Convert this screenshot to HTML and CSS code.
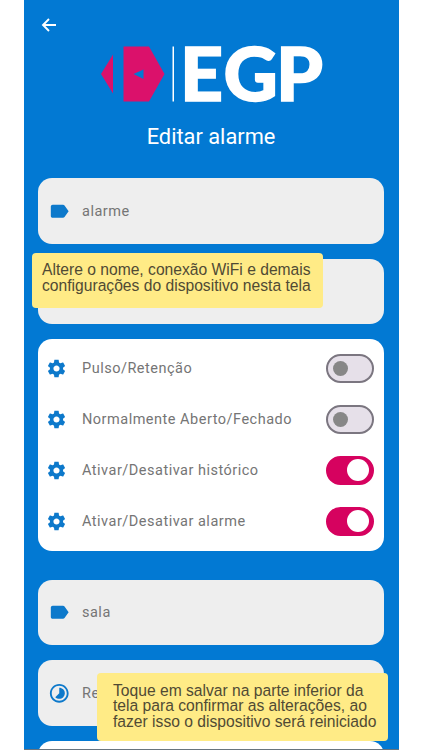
FILE: index.html
```html
<!DOCTYPE html>
<html lang="pt-BR">
<head>
    <title>Editar alarme</title>
    <meta charset="UTF-8">
    <meta name="viewport" content="width=device-width, initial-scale=1.0">
    <link rel="stylesheet" href="styles.css">
</head>
<body>
    <!-- shared icons -->
    <svg class="sprite">
        <symbol id="label" viewBox="0 0 24 24"><path d="M17.63 5.84C17.27 5.33 16.67 5 16 5L5 5.01C3.9 5.01 3 5.9 3 7v10c0 1.1.9 1.99 2 1.99L16 19c.67 0 1.27-.33 1.63-.84L22 12l-4.37-6.16z"/></symbol>
        <symbol id="gear" viewBox="0 0 24 24"><path d="M19.43 12.98c.04-.32.07-.64.07-.98s-.03-.66-.07-.98l2.11-1.65c.19-.15.24-.42.12-.64l-2-3.46c-.12-.22-.39-.3-.61-.22l-2.49 1c-.52-.4-1.08-.73-1.69-.98l-.38-2.65C14.46 2.18 14.25 2 14 2h-4c-.25 0-.46.18-.49.42l-.38 2.65c-.61.25-1.17.59-1.69.98l-2.49-1c-.23-.09-.49 0-.61.22l-2 3.46c-.13.22-.07.49.12.64l2.11 1.65c-.04.32-.07.65-.07.98s.03.66.07.98l-2.11 1.65c-.19.15-.24.42-.12.64l2 3.46c.12.22.39.3.61.22l2.49-1c.52.4 1.08.73 1.69.98l.38 2.65c.03.24.24.42.49.42h4c.25 0 .46-.18.49-.42l.38-2.65c.61-.25 1.17-.59 1.69-.98l2.49 1c.23.09.49 0 .61-.22l2-3.46c.12-.22.07-.49-.12-.64l-2.11-1.65zM12 15.5c-1.93 0-3.5-1.57-3.5-3.5s1.57-3.5 3.5-3.5 3.5 1.57 3.5 3.5-1.57 3.5-3.5 3.5z"/></symbol>
        <symbol id="timelapse" viewBox="0 0 24 24"><path d="M16.24 7.76C15.07 6.59 13.54 6 12 6v6l-4.24 4.24c2.34 2.34 6.14 2.34 8.49 0 2.34-2.34 2.34-6.14-.01-8.48zM12 2C6.48 2 2 6.48 2 12s4.48 10 10 10 10-4.48 10-10S17.52 2 12 2zm0 18c-4.42 0-8-3.58-8-8s3.58-8 8-8 8 3.58 8 8-3.58 8-8 8z"/></symbol>
    </svg>

    <div class="screen">
        <header>
            <svg class="back" viewBox="0 0 16 16"><path d="M15 8H2M8 2L2 8l6 6"/></svg>
            <svg class="logo" viewBox="0 -20 232 96">
                <path class="mark" d="M0 29L12 9.500v39zM22.500 1.500h25.500L63.500 29 48 56.500H22.500z"/>
                <path class="eye" d="M32.500 29L42.500 24.500v9.500z"/>
                <path class="bar" d="M71.500 1.500H73v55h-1.500z"/>
                <text x="79 122.500 175" y="56">EGP</text>
            </svg>
            <h1>Editar alarme</h1>
        </header>

        <div class="field">
            <svg class="icon"><use href="#label"/></svg>
            <span>alarme</span>
        </div>
        <div class="field covered">
            <div class="note note-top">Altere o nome, conexão WiFi e demais<br>configurações do dispositivo nesta tela</div>
        </div>

        <div class="panel">
            <div class="row">
                <svg class="icon"><use href="#gear"/></svg>
                <span>Pulso/Retenção</span>
                <div class="switch"></div>
            </div>
            <div class="row">
                <svg class="icon"><use href="#gear"/></svg>
                <span>Normalmente Aberto/Fechado</span>
                <div class="switch"></div>
            </div>
            <div class="row">
                <svg class="icon"><use href="#gear"/></svg>
                <span>Ativar/Desativar histórico</span>
                <div class="switch on"></div>
            </div>
            <div class="row">
                <svg class="icon"><use href="#gear"/></svg>
                <span>Ativar/Desativar alarme</span>
                <div class="switch on"></div>
            </div>
        </div>

        <div class="field">
            <svg class="icon"><use href="#label"/></svg>
            <span>sala</span>
        </div>
        <div class="field covered">
            <svg class="icon"><use href="#timelapse"/></svg>
            <span>Re</span>
            <div class="note note-bottom">Toque em salvar na parte inferior da<br>tela para confirmar as alterações, ao<br>fazer isso o dispositivo será reiniciado</div>
        </div>
        <div class="panel next"></div>
    </div>
</body>
</html>
```
FILE: styles.css
```css
* {
    box-sizing: border-box;
}
body {
    margin: 0;
    height: 750px;
    overflow: hidden;
    background-color: white;
    font-family: Roboto, sans-serif;
}
.sprite {
    display: none;
}
.screen {
    width: 375px;
    height: 750px;
    margin: 0 auto;
    padding: 0 14.5px;
    overflow: hidden;
    background-color: #0279d3;
    border-bottom: 1px solid #68747e;
}
header {
    height: 178px;
    padding-top: 17px;
    display: flex;
    flex-direction: column;
    align-items: center;
}
.back {
    width: 16px;
    height: 16px;
    margin-left: 3px;
    align-self: flex-start;
    flex: none;
    fill: none;
    stroke: white;
    stroke-width: 1.9;
}
.logo {
    width: 232px;
    height: 96px;
    flex: none;
    margin-top: -8px;
    margin-left: 12px;
}
.logo .mark {
    fill: #db116b;
}
.logo .eye {
    fill: #0279d3;
}
.logo .bar {
    fill: white;
}
.logo text {
    font: 900 75px Lato, sans-serif;
    fill: white;
    stroke: white;
    stroke-width: 1.5;
}
h1 {
    margin: 1.5px 0 0;
    font-size: 21.8px;
    line-height: 28px;
    font-weight: 400;
    color: white;
}
.field {
    height: 65.5px;
    margin-bottom: 15px;
    padding-left: 10px;
    border-radius: 14px;
    background-color: #eeeeee;
    display: flex;
    align-items: center;
}
.covered {
    position: relative;
}
.icon {
    width: 22.5px;
    height: 22.5px;
    fill: #0d79cb;
    flex: none;
}
.field span,
.row span {
    margin-left: 11.5px;
    font-size: 14.5px;
    letter-spacing: 0.5px;
    color: #757575;
}
.panel {
    height: 211.5px;
    margin-bottom: 29px;
    padding: 3.5px 10.5px 0 7.5px;
    border-radius: 14px;
    background-color: white;
}
.row {
    height: 51px;
    display: flex;
    align-items: center;
}
.row .icon {
    width: 21px;
    height: 21px;
}
.row span {
    margin-left: 15.5px;
}
.field span {
    padding-top: 1px;
}
.switch {
    width: 48px;
    height: 29px;
    margin-left: auto;
    padding-left: 5px;
    border: 2px solid #7b7680;
    border-radius: 15px;
    background-color: #e6e0e9;
    display: flex;
    align-items: center;
}
.switch::before {
    content: "";
    width: 15px;
    height: 15px;
    border-radius: 50%;
    background-color: #878787;
}
.switch.on {
    border-color: #d6025f;
    background-color: #d6025f;
    padding-left: 19.5px;
}
.switch.on::before {
    width: 22px;
    height: 22px;
    background-color: white;
}
/* yellow hints over the form */
.note {
    position: absolute;
    z-index: 1;
    width: 291.5px;
    border-radius: 4px;
    background-color: #ffeb86;
    font: 15.65px/15.7px "Liberation Sans", Arial, sans-serif;
    color: #504a34;
    white-space: nowrap;
}
.note-top {
    top: -5.5px;
    left: -6.5px;
    height: 54.5px;
    padding: 9px 0 0 10.5px;
}
.note-bottom {
    top: 13px;
    left: 58.5px;
    height: 68px;
    padding: 9.5px 0 0 16.5px;
}
```
